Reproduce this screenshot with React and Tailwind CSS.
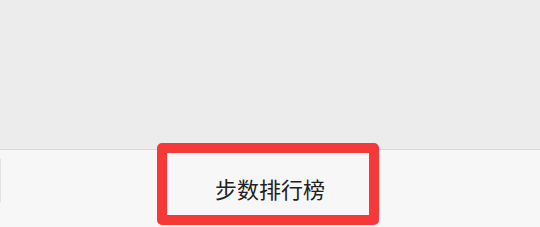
export default function App() {
  return (
    <div className="relative w-[540px] h-[227px] overflow-hidden bg-[#f7f7f7]" style={{ fontFamily: '"Noto Sans CJK SC", "Noto Sans", sans-serif' }}>
      <div className="h-[150px] bg-[#ececec] border-b border-[#dadada]" />
      <div className="flex h-[77px] items-center">
        <div className="w-[1px] h-[43px] bg-[#e2e2e2] mt-[-16px]" />
        <div className="flex-1 flex justify-center items-center">
          <span className="text-[22px] leading-none text-[#222222] mt-[-2px] ml-[-1px]">步数排行榜</span>
        </div>
      </div>
      <div className="absolute left-[157px] top-[143px] w-[222px] h-[82px] border-[10px] border-[#f63838] rounded-[5px]" />
    </div>
  );
}
